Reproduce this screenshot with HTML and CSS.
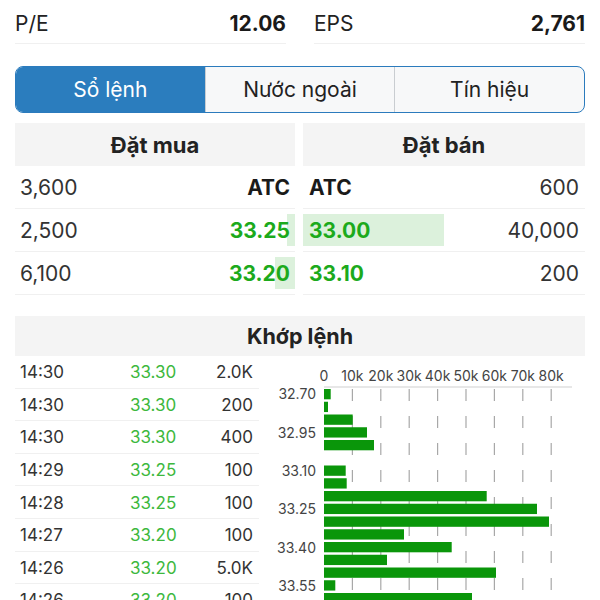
FILE: index.html
```html
<!DOCTYPE html>
<html lang="vi">
<head>
<meta charset="utf-8">
<title>Sổ lệnh</title>
<link rel="stylesheet" href="styles.css">
</head>
<body>
<div class="page">
  <div class="stats">
    <div class="stat"><span class="stat-label">P/E</span><span class="stat-value">12.06</span></div>
    <div class="stat"><span class="stat-label">EPS</span><span class="stat-value">2,761</span></div>
  </div>

  <div class="tabs">
    <div class="tab active">Sổ lệnh</div>
    <div class="tab">Nước ngoài</div>
    <div class="tab">Tín hiệu</div>
  </div>

  <div class="book">
    <div class="book-col buy">
      <div class="book-head">Đặt mua</div>
      <div class="book-row"><span class="qty">3,600</span><span class="price atc">ATC</span></div>
      <div class="book-row"><span class="hl hl-right" style="width:8px"></span><span class="qty">2,500</span><span class="price up">33.25</span></div>
      <div class="book-row"><span class="hl hl-right" style="width:20px"></span><span class="qty">6,100</span><span class="price up">33.20</span></div>
    </div>
    <div class="book-col sell">
      <div class="book-head">Đặt bán</div>
      <div class="book-row"><span class="price atc">ATC</span><span class="qty">600</span></div>
      <div class="book-row"><span class="hl hl-left" style="width:141px"></span><span class="price up">33.00</span><span class="qty">40,000</span></div>
      <div class="book-row"><span class="price up">33.10</span><span class="qty">200</span></div>
    </div>
  </div>

  <div class="match">
    <div class="match-head">Khớp lệnh</div>
    <div class="match-body">
      <div class="trades">
        <div class="trade"><span>14:30</span><span class="tp">33.30</span><span class="tv">2.0K</span></div>
        <div class="trade"><span>14:30</span><span class="tp">33.30</span><span class="tv">200</span></div>
        <div class="trade"><span>14:30</span><span class="tp">33.30</span><span class="tv">400</span></div>
        <div class="trade"><span>14:29</span><span class="tp">33.25</span><span class="tv">100</span></div>
        <div class="trade"><span>14:28</span><span class="tp">33.25</span><span class="tv">100</span></div>
        <div class="trade"><span>14:27</span><span class="tp">33.20</span><span class="tv">100</span></div>
        <div class="trade"><span>14:26</span><span class="tp">33.20</span><span class="tv">5.0K</span></div>
        <div class="trade"><span>14:26</span><span class="tp">33.20</span><span class="tv">100</span></div>
      </div>
      <div class="chart">
        <svg width="320" height="250" viewBox="0 0 320 250">
          <g class="xlab">
            <text x="59" y="25">0</text>
            <text x="87.4" y="25">10k</text>
            <text x="115.8" y="25">20k</text>
            <text x="144.2" y="25">30k</text>
            <text x="172.6" y="25">40k</text>
            <text x="201" y="25">50k</text>
            <text x="229.4" y="25">60k</text>
            <text x="257.8" y="25">70k</text>
            <text x="286.2" y="25">80k</text>
          </g>
          <line class="axis" x1="59" y1="31" x2="307" y2="31"/>
          <g class="grid">
            <line x1="87.4" y1="33" x2="87.4" y2="250"/>
            <line x1="115.8" y1="33" x2="115.8" y2="250"/>
            <line x1="144.2" y1="33" x2="144.2" y2="250"/>
            <line x1="172.6" y1="33" x2="172.6" y2="250"/>
            <line x1="201" y1="33" x2="201" y2="250"/>
            <line x1="229.4" y1="33" x2="229.4" y2="250"/>
            <line x1="257.8" y1="33" x2="257.8" y2="250"/>
            <line x1="286.2" y1="33" x2="286.2" y2="250"/>
          </g>
          <g class="bars">
            <rect x="59" y="33" width="6.7" height="10.3"/>
            <rect x="59" y="45.75" width="4" height="10.3"/>
            <rect x="59" y="58.5" width="28.7" height="10.3"/>
            <rect x="59" y="71.25" width="43" height="10.3"/>
            <rect x="59" y="84" width="50" height="10.3"/>
            <rect x="59" y="109.5" width="21.7" height="10.3"/>
            <rect x="59" y="122.25" width="22.7" height="10.3"/>
            <rect x="59" y="135" width="162.7" height="10.3"/>
            <rect x="59" y="147.75" width="213" height="10.3"/>
            <rect x="59" y="160.5" width="225" height="10.3"/>
            <rect x="59" y="173.25" width="80" height="10.3"/>
            <rect x="59" y="186" width="127.7" height="10.3"/>
            <rect x="59" y="198.75" width="63" height="10.3"/>
            <rect x="59" y="211.5" width="172" height="10.3"/>
            <rect x="59" y="224.25" width="11.3" height="10.3"/>
            <rect x="59" y="237" width="148" height="10.3"/>
          </g>
          <g class="ylab">
            <text x="51" y="43">32.70</text>
            <text x="51" y="81.5">32.95</text>
            <text x="51" y="120">33.10</text>
            <text x="51" y="158">33.25</text>
            <text x="51" y="196.5">33.40</text>
            <text x="51" y="235">33.55</text>
          </g>
        </svg>
      </div>
    </div>
  </div>
</div>
</body>
</html>
```
FILE: styles.css
```css
* { box-sizing: border-box; }
html, body { margin: 0; padding: 0; background: #fff; }
body {
  font-family: "Inter", "Noto Sans", "Liberation Sans", sans-serif;
  color: #222;
  overflow: hidden;
  height: 600px;
}
.page { padding: 0 15px; }

.stats {
  display: grid;
  grid-template-columns: 1fr 1fr;
  column-gap: 28px;
}
.stat {
  height: 44px;
  padding-top: 3px;
  display: flex;
  align-items: center;
  justify-content: space-between;
  border-bottom: 1px solid #f0f0f0;
  font-size: 21px;
}
.stat-label { color: #222; }
.stat-value { font-weight: 700; color: #1a1a1a; }

.tabs {
  margin-top: 22px;
  height: 47px;
  display: flex;
  border: 1.5px solid #2b7bbd;
  border-radius: 8px;
  overflow: hidden;
  background: #f7f8f9;
}
.tab {
  flex: 1;
  display: flex;
  align-items: center;
  justify-content: center;
  font-size: 21px;
  color: #222;
  border-left: 1px solid #c9cdd1;
}
.tab:first-child { border-left: none; }
.tab.active { background: #2b7dbe; color: #fff; }

.book {
  margin-top: 10px;
  display: grid;
  grid-template-columns: 280px 1fr;
  column-gap: 8px;
}
.book-head {
  height: 43px;
  background: #f4f4f4;
  display: flex;
  align-items: center;
  justify-content: center;
  font-weight: 700;
  font-size: 22px;
  color: #222;
}
.book-row {
  position: relative;
  height: 43px;
  display: flex;
  align-items: center;
  justify-content: space-between;
  border-bottom: 1px solid #f0f0f0;
  font-size: 21px;
  padding: 0 5px;
}
.sell .book-row { padding: 0 6px; }
.book-row > span { position: relative; }
.qty { color: #333; }
.price { font-weight: 700; }
.atc { color: #1a1a1a; }
.up { color: #1caa1c; }
.book-row > .hl {
  position: absolute;
  top: 5px;
  bottom: 5px;
  background: #dcf1dc;
}
.hl-right { right: 0; }
.hl-left { left: 0; }

.match { margin-top: 21px; }
.match-head {
  height: 40px;
  background: #f4f4f4;
  display: flex;
  align-items: center;
  justify-content: center;
  font-weight: 700;
  font-size: 21.5px;
  color: #222;
}
.match-body {
  display: grid;
  grid-template-columns: 244px 1fr;
  column-gap: 6px;
}
.trade {
  height: 32.6px;
  display: grid;
  grid-template-columns: 110px auto 1fr;
  align-items: center;
  padding: 1px 6px 0 5px;
  border-bottom: 1px solid #f0f0f0;
  font-size: 17px;
  color: #333;
}
.tp { color: #3db83d; }
.tv { text-align: right; }

.chart svg { display: block; }
.xlab text {
  font-size: 14px;
  fill: #444;
  text-anchor: middle;
}
.ylab text {
  font-size: 14px;
  fill: #444;
  text-anchor: end;
}
.axis { stroke: #cfcfcf; stroke-width: 1; }
.grid line {
  stroke: #a8a8a8;
  stroke-width: 1.2;
  stroke-dasharray: 12 15;
}
.bars rect { fill: #0a960a; }
```
